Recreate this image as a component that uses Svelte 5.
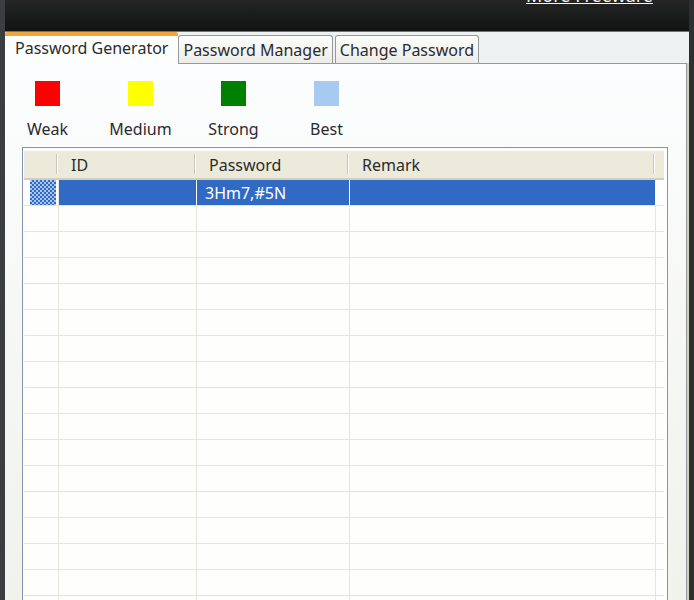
<div class="window">
    <header>
        <a href="#more">More Freeware</a>
    </header>

    <div class="tabs" role="tablist">
        {#each tabs as tab}
            <button role="tab" aria-selected={current_tab===tab}
                    class:now={current_tab===tab}
                    on:click={()=>changeTab(tab)}
            >{tab}</button>
        {/each}
    </div>

    <main>
        <ul class="legend">
            {#each levels as level}
                <li><i class="{level.toLowerCase()}"></i>{level}</li>
            {/each}
        </ul>

        <div class="tableWrapper">
            <table>
                <thead>
                    <tr>
                        <th class="mark"></th>
                        <th class="id">ID</th>
                        <th class="password">Password</th>
                        <th>Remark</th>
                        <th class="rest"></th>
                    </tr>
                </thead>
                <tbody>
                    {#each rows as row, index}
                        <tr class:selected={current_row===index} on:click={()=>current_row = index}>
                            <td class="mark"><span></span></td>
                            <td>{row.id}</td>
                            <td>{row.password}</td>
                            <td>{row.remark}</td>
                            <td class="rest"></td>
                        </tr>
                    {/each}
                </tbody>
            </table>
        </div>
    </main>
</div>

<script>
    const tabs = ['Password Generator', 'Password Manager', 'Change Password']
    const levels = ['Weak', 'Medium', 'Strong', 'Best']

    let current_tab = tabs[0]
    function changeTab(tab){
        current_tab = tab
    }

    // the grid always shows empty rows below the data
    let current_row = 0
    let rows = Array.from({length: 24}, ()=>({id: '', password: '', remark: ''}))
    rows[0].password = '3Hm7,#5N'
</script>

<style>
    .window{
        display: flex;
        flex-direction: column;
        box-sizing: border-box;
        height: 100vh;
        overflow: hidden;
        border-left: 5px solid #3b3d40;
        border-right: 5px solid #2c3030;
        background: #eef1f2;
        color: #2b2b2e;
        font-family: Tahoma, "Noto Sans", sans-serif;
        font-size: 16px;
        line-height: 20px;
    }
    header{
        flex: none;
        box-sizing: border-box;
        height: 47px;
        margin-top: -15px;
        padding-right: 36px;
        text-align: right;
        background: linear-gradient(#242524 15px, #101413);
        border-bottom: 1px solid #6e7372;
    }
    header a{
        color: #f4f4f4;
        font-size: 18px;
        line-height: 20px;
    }
    .tabs{
        display: flex;
        flex: none;
        align-items: flex-end;
        height: 31px;
    }
    .tabs button{
        box-sizing: border-box;
        height: 28px;
        margin: 0 2px 0 0;
        padding: 0 4px;
        border: 1px solid #969a9a;
        border-bottom: none;
        border-radius: 3px 3px 0 0;
        background: linear-gradient(#fdfdfc, #ecece8);
        color: inherit;
        font: inherit;
        white-space: nowrap;
    }
    .tabs .now{
        height: 32px;
        margin: 0 0 -1px;
        padding: 0 10px 4px;
        border: none;
        border-top: 4px solid #f0a43c;
        border-radius: 2px 2px 0 0;
        background: #fcfdfd;
        position: relative;
    }
    main{
        flex: 1;
        min-height: 0;
        margin-right: 2px;
        padding: 17px 18px 0 17px;
        border-top: 1px solid #969a9a;
        border-right: 1px solid #969a9a;
        box-shadow: 2px 0 #cfd1c0;
        background: linear-gradient(#fcfdfe, #f0f2ec);
    }
    .legend{
        display: flex;
        margin: 0 0 8px -21px;
        padding: 0;
        list-style: none;
    }
    .legend li{
        display: flex;
        flex-direction: column;
        align-items: center;
        gap: 13px;
        width: 93px;
    }
    .legend i{
        width: 25px;
        height: 25px;
    }
    .legend .weak{
        background: #ff0000;
    }
    .legend .medium{
        background: #ffff00;
    }
    .legend .strong{
        background: #008000;
    }
    .legend .best{
        background: #a6caf0;
    }
    .tableWrapper{
        padding: 3px 3px 0 1px;
        border: 1px solid #8493b0;
        background: #fefefd;
    }
    table{
        width: 100%;
        border-collapse: separate;
        border-spacing: 0;
        table-layout: fixed;
    }
    th, td{
        box-sizing: border-box;
        padding: 0 8px;
        text-align: left;
        white-space: nowrap;
        overflow: hidden;
        text-overflow: ellipsis;
    }
    th{
        height: 29px;
        padding: 0 12px;
        font-weight: normal;
        border-bottom: 2px solid #d2cfbd;
        background: linear-gradient(#c9c7b7, #c9c7b7) right 2px top 3px / 1px 20px no-repeat, linear-gradient(#ffffff, #ffffff) right 1px top 3px / 1px 20px no-repeat, #ebeadb;
    }
    td{
        height: 26px;
        border-right: 1px solid #e6e6dc;
        border-bottom: 1px solid #e4e4e0;
    }
    .mark{
        width: 35px;
        padding: 0 2px 0 6px;
    }
    .id{
        width: 138px;
    }
    .password{
        width: 153px;
    }
    .rest{
        width: 8px;
        padding: 0;
        border-right: none;
    }
    th.rest{
        background: #ebeadb;
    }
    .mark span{
        display: block;
        height: 25px;
    }
    .selected td:not(.mark):not(.rest){
        background: #316ac5;
        background-clip: padding-box;
        color: #ffffff;
        border-right-color: #ffffff;
    }
    .selected .mark span{
        background: conic-gradient(#316ac5 25%, #a9c6f0 0 50%, #316ac5 0 75%, #a9c6f0 0) 0 0 / 4px 4px;
    }
</style>
